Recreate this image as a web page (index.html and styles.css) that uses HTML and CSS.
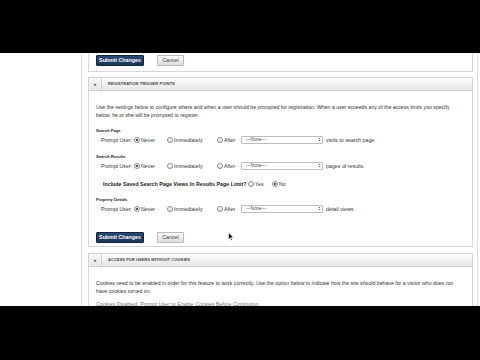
FILE: index.html
```html
<!DOCTYPE html>
<html>
<head>
<meta charset="utf-8">
<link rel="stylesheet" href="styles.css">
</head>
<body>
<div class="frame">
  <div class="bar"></div>
  <div class="screen">
    <aside class="sidebar"></aside>
    <main class="main">
      <section class="panel partial">
        <div class="actions">
          <button class="btn primary">Submit Changes</button>
          <button class="btn">Cancel</button>
        </div>
      </section>

      <section class="panel">
        <header class="panel-head"><span class="toggle">&raquo;</span><h2 class="panel-title">Registration Trigger Points</h2></header>
        <div class="panel-body">
          <p class="desc"><span class="line">Use the settings below to configure where and when a user should be prompted for registration. When a user exceeds any of the access limits you specify</span><span class="line">below, he or she will be prompted to register.</span></p>

          <div class="group first">
            <h3 class="group-title">Search Page</h3>
            <div class="prompt-row">
              <span class="prompt-label">Prompt User:</span>
              <span class="opt opt-never"><span class="radio checked"></span>Never</span>
              <span class="opt opt-imm"><span class="radio"></span>Immediately</span>
              <span class="opt opt-after"><span class="radio"></span>After</span>
              <span class="select">---None---<svg class="arrows" viewBox="0 0 4 6" width="3" height="5"><path d="M0.5 2.4 L2 0.6 L3.5 2.4 Z M0.5 3.6 L2 5.4 L3.5 3.6 Z" fill="#555"/></svg></span>
              <span class="suffix">visits to search page.</span>
            </div>
          </div>

          <div class="group">
            <h3 class="group-title">Search Results</h3>
            <div class="prompt-row">
              <span class="prompt-label">Prompt User:</span>
              <span class="opt opt-never"><span class="radio checked"></span>Never</span>
              <span class="opt opt-imm"><span class="radio"></span>Immediately</span>
              <span class="opt opt-after"><span class="radio"></span>After</span>
              <span class="select">---None---<svg class="arrows" viewBox="0 0 4 6" width="3" height="5"><path d="M0.5 2.4 L2 0.6 L3.5 2.4 Z M0.5 3.6 L2 5.4 L3.5 3.6 Z" fill="#555"/></svg></span>
              <span class="suffix">pages of results.</span>
            </div>
          </div>

          <div class="include-row">
            <span class="include-label">Include Saved Search Page Views In Results Page Limit?</span>
            <span class="opt opt-yes"><span class="radio"></span>Yes</span>
            <span class="opt"><span class="radio checked"></span>No</span>
          </div>

          <div class="group third">
            <h3 class="group-title">Property Details</h3>
            <div class="prompt-row">
              <span class="prompt-label">Prompt User:</span>
              <span class="opt opt-never"><span class="radio checked"></span>Never</span>
              <span class="opt opt-imm"><span class="radio"></span>Immediately</span>
              <span class="opt opt-after"><span class="radio"></span>After</span>
              <span class="select">---None---<svg class="arrows" viewBox="0 0 4 6" width="3" height="5"><path d="M0.5 2.4 L2 0.6 L3.5 2.4 Z M0.5 3.6 L2 5.4 L3.5 3.6 Z" fill="#555"/></svg></span>
              <span class="suffix">detail views.</span>
            </div>
          </div>

          <div class="actions bottom">
            <button class="btn primary">Submit Changes</button>
            <button class="btn">Cancel</button>
          </div>
        </div>
      </section>

      <section class="panel">
        <header class="panel-head"><span class="toggle">&raquo;</span><h2 class="panel-title">Access for Users Without Cookies</h2></header>
        <div class="panel-body">
          <p class="desc"><span class="line">Cookies need to be enabled in order for this feature to work correctly. Use the option below to indicate how the site should behave for a visitor who does not</span><span class="line">have cookies turned on.</span></p>
          <p class="clipped-line">Cookies Disabled: Prompt User to Enable Cookies Before Continuing</p>
        </div>
      </section>
    </main>
    <svg class="cursor" viewBox="0 0 6 9" width="6" height="9"><path d="M0.5 0.5 L0.5 7.5 L2.2 5.9 L3.4 8.5 L4.4 8 L3.3 5.5 L5.5 5.5 Z" fill="#111" stroke="#fff" stroke-width="0.6"/></svg>
  </div>
  <div class="bar bottom"></div>
</div>
</body>
</html>
```

FILE: styles.css
```css
html, body {
  margin: 0;
  padding: 0;
  background: #000;
}

body {
  font-family: "Liberation Sans", Arial, sans-serif;
  color: #333;
}

.frame {
  width: 480px;
  height: 360px;
  display: flex;
  flex-direction: column;
  overflow: hidden;
}

.bar {
  flex: none;
  height: 53px;
  background: #000;
}

.bar.bottom {
  flex: 1;
}

.screen {
  flex: none;
  height: 253px;
  display: flex;
  background: #fff;
  overflow: hidden;
  position: relative;
}

.sidebar {
  flex: none;
  width: 81px;
  border-right: 1px solid #d9d9d9;
}

.main {
  flex: none;
  width: 385px;
  padding: 0 4px 0 6px;
  border-right: 1px solid #dedede;
}

.panel {
  border: 1px solid #d6d6d6;
  background: #fff;
}

.panel.partial {
  border-top: none;
}

.panel + .panel {
  margin-top: 5px;
}

.panel + .panel + .panel {
  margin-top: 6px;
}

.actions {
  display: flex;
  gap: 13px;
  padding: 2px 7px 5px;
}

.actions.bottom {
  margin-top: 19px;
  padding: 0 0 3px;
}

.btn {
  margin: 0;
  height: 11px;
  padding: 0;
  font-family: inherit;
  font-size: 5.3px;
  line-height: 9px;
  border-radius: 1px;
  cursor: default;
  width: 27px;
  color: #444;
  border: 1px solid #b9b9b9;
  background: linear-gradient(#fbfbfb, #dedede);
}

.btn.primary {
  width: 48px;
  color: #fff;
  font-weight: bold;
  border: 1px solid #0f2440;
  background: linear-gradient(#2a4a73, #1a3558);
}

.panel-head {
  display: flex;
  align-items: stretch;
  height: 12px;
  border-bottom: 1px solid #cfcfcf;
  background: linear-gradient(#fdfdfd, #e6e6e6);
}

.toggle {
  flex: none;
  width: 12px;
  border-right: 1px solid #d0d0d0;
  background: linear-gradient(#f6f6f6, #e9e9e9);
  font-size: 5px;
  font-weight: bold;
  line-height: 12px;
  text-align: center;
  color: #444;
}

.panel-title {
  margin: 0 0 0 6px;
  font-size: 4px;
  font-weight: bold;
  text-transform: uppercase;
  line-height: 12px;
  color: #444;
  letter-spacing: 0.05px;
}

.panel-body {
  padding: 12px 7px 0;
}

.desc {
  margin: 0;
  font-size: 5.2px;
  line-height: 8px;
  color: #333;
}

.line {
  display: block;
  white-space: nowrap;
}

.group {
  margin-top: 8px;
}

.group.first {
  margin-top: 7px;
}

.group.third {
  margin-top: 7px;
}

.group-title {
  margin: 0;
  font-size: 4.1px;
  line-height: 9px;
  font-weight: bold;
  color: #222;
}

.prompt-row,
.include-row {
  display: flex;
  align-items: center;
  height: 9px;
  font-size: 5.3px;
  white-space: nowrap;
}

.prompt-row {
  padding-left: 5px;
}

.include-row {
  margin-top: 9px;
  padding-left: 7px;
}

.prompt-label {
  width: 33px;
}

.opt {
  display: flex;
  align-items: center;
  gap: 1px;
}

.opt-never {
  width: 33px;
}

.opt-imm {
  width: 50px;
}

.opt-after {
  width: 24px;
}

.opt-yes {
  width: 24px;
}

.radio {
  display: inline-block;
  width: 4px;
  height: 4px;
  border: 0.7px solid #8a8a8a;
  border-radius: 50%;
  background: linear-gradient(#fff, #e2e2e2);
}

.radio.checked {
  background: radial-gradient(circle, #555 0 1.1px, #f3f3f3 1.3px);
}

.include-label {
  font-weight: bold;
  color: #222;
  width: 145px;
}

.select {
  display: flex;
  align-items: center;
  justify-content: space-between;
  box-sizing: border-box;
  width: 82px;
  height: 8px;
  padding: 0 1px 0 4px;
  border: 1px solid #bdbdbd;
  border-radius: 1px;
  background: #fff;
  font-size: 4.6px;
  color: #444;
}

.arrows {
  display: block;
}

.suffix {
  margin-left: 3px;
}

.clipped-line {
  margin: 5px 0 0;
  font-size: 5.3px;
  line-height: 9px;
  color: #777;
}

.cursor {
  position: absolute;
  left: 228px;
  top: 179px;
}
```
